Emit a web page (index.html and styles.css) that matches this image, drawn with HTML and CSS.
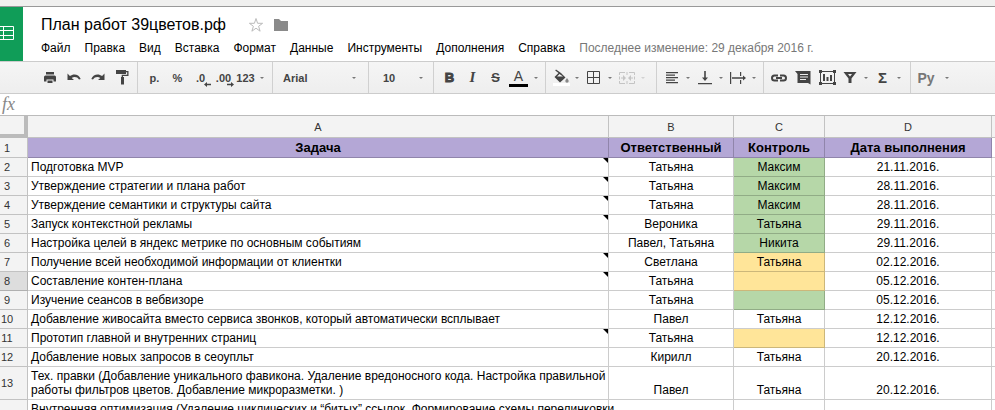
FILE: index.html
```html
<!DOCTYPE html>
<html lang="ru">
<head>
<meta charset="UTF-8">
<meta name="viewport" content="width=device-width, initial-scale=1.0">
<title>План работ 39цветов.рф</title>
<link rel="stylesheet" href="styles.css">
</head>
<body>

<!-- Header -->
<header class="header">
  <a class="logo" href="#" aria-label="Таблицы">
    <svg width="23" height="54" viewBox="0 0 23 54" fill="none" stroke="#fff" stroke-width="1"><path d="M-6 19.5H13.5V32.5H-6M-6 23.5H13.5M-6 28.5H13.5M3.5 19V33"/></svg>
  </a>
  <div class="header-main">
    <div class="title-row">
      <h1 class="title">План работ 39цветов.рф</h1>
      <button class="title-btn" aria-label="Пометить">
        <svg width="16" height="16" viewBox="0 0 16 16" fill="none" stroke="#bbb"><path d="M8 1.500l1.600 4.800h5l-4 3 1.500 4.900L8 11.200l-4.100 3 1.500-4.900-4-3h5z"/></svg>
      </button>
      <button class="title-btn" aria-label="Папка">
        <svg width="16" height="16" viewBox="0 0 16 16" fill="#8a8a8a"><path d="M1 2h5l2 2h7v10H1z"/></svg>
      </button>
    </div>
    <nav class="menu">
      <button>Файл</button>
      <button>Правка</button>
      <button>Вид</button>
      <button>Вставка</button>
      <button>Формат</button>
      <button>Данные</button>
      <button>Инструменты</button>
      <button>Дополнения</button>
      <button>Справка</button>
      <a class="changed" href="#">Последнее изменение: 29 декабря 2016 г.</a>
    </nav>
  </div>
</header>

<!-- Toolbar -->
<div class="toolbar">
  <div class="group group-file">
    <button class="tool" aria-label="Печать"><svg width="14" height="14" viewBox="0 0 14 14"><path fill="#444" d="M3 1h8v2.500H3zM2.500 4.500h9A1.500 1.500 0 0 1 13 6v4.500h-2.500V8.500h-7v2H1V6a1.500 1.500 0 0 1 1.500-1.500zM4.500 9.500h5V12h-5z"/></svg></button>
    <button class="tool" aria-label="Отменить"><svg width="14" height="14" viewBox="0 0 14 14"><path fill="#444" d="M.5 2.500v6.500h6.500L4.700 6.900C7 5.300 10.500 5.700 12 8.500l1.700-.6C11.700 3 6.500 2.300 2.900 5z"/></svg></button>
    <button class="tool" aria-label="Повторить"><svg width="14" height="14" viewBox="0 0 14 14"><path fill="#444" d="M13.500 2.500v6.500H7l2.300-2.100C7 5.300 3.500 5.700 2 8.500L.3 7.900C2.300 3 7.500 2.300 11.100 5z"/></svg></button>
    <button class="tool" aria-label="Копировать форматирование"><svg width="14" height="16" viewBox="0 0 14 16"><path fill="#444" d="M1 0h10v1h2.500v5H8v1h1v7.500H6V7h.700V4.700h5.500V2.300H11V4H1z"/></svg></button>
  </div>
  <div class="group group-number">
    <button class="tool narrow">р.</button>
    <button class="tool narrow">%</button>
    <button class="tool narrow decimal">.0<svg width="7" height="5" viewBox="0 0 7 5"><path fill="#444" d="M0 2.500L3 0v1.700h4v1.600H3V5z"/></svg></button>
    <button class="tool narrow decimal">.00<svg width="7" height="5" viewBox="0 0 7 5"><path fill="#444" d="M7 2.500L4 0v1.700H0v1.600h4V5z"/></svg></button>
    <button class="split"><span class="face">123</span><span class="caret"></span></button>
  </div>
  <div class="group group-font">
    <select class="font" aria-label="Шрифт"><option>Arial</option></select><span class="caret"></span>
  </div>
  <div class="group group-size">
    <select class="size" aria-label="Размер шрифта"><option>10</option></select><span class="caret"></span>
  </div>
  <div class="group group-text">
    <button class="tool narrow glyph bold">B</button>
    <button class="tool narrow glyph italic">I</button>
    <button class="tool narrow glyph strike">S</button>
    <button class="split wide"><span class="face color">A</span><span class="caret"></span></button>
  </div>
  <div class="group group-cell">
    <button class="split" aria-label="Цвет заливки"><span class="face"><svg width="18" height="18" viewBox="0 0 18 18"><path fill="#fff" d="M1 14h17v3H1z"/><path fill="#444" d="M4 .5L9 4l4.500 4.500L8 13.500 2.500 8l4-4-3.300-2.400zM7.500 5L5 7.500h6z"/><path fill="#888" d="M15 9c1 1.300 1.700 2.200 1.700 3a1.700 1.700 0 0 1-3.400 0c0-.8.700-1.700 1.700-3z"/></svg></span><span class="caret"></span></button>
    <button class="split" aria-label="Границы"><span class="face"><svg width="13" height="13" viewBox="0 0 13 13" fill="none" stroke="#444"><path d="M.5.5h12v12H.5zM6.500.5v12M.5 6.500h12"/></svg></span><span class="caret"></span></button>
    <button class="split" aria-label="Объединить ячейки" disabled><span class="face"><svg width="18" height="14" viewBox="0 0 18 14" fill="none" stroke="#444"><path d="M7 1.500H1.500V4M1.500 10v2.500H7M11 1.500h5.500V4M16.500 10v2.500H11M1.500 5.500v3M16.500 5.500v3M9 1v3M9 10v3M3 7h3M15 7h-3"/><path fill="#444" stroke="none" d="M5 4l3 3-3 3zM13 4l-3 3 3 3z"/></svg></span><span class="caret"></span></button>
  </div>
  <div class="group group-align">
    <button class="split" aria-label="Выравнивание по горизонтали"><span class="face"><svg width="14" height="12" viewBox="0 0 14 12"><path fill="#444" d="M1 0h12v1.300H1zM1 2.500h9v1.300H1zM1 5h12v1.300H1zM1 7.500h9v1.300H1zM1 10h12v1.300H1z"/></svg></span><span class="caret"></span></button>
    <button class="split" aria-label="Выравнивание по вертикали"><span class="face"><svg width="14" height="14" viewBox="0 0 14 14"><path fill="#444" d="M6.200 0h1.600v6.500H10l-3 3.500-3-3.500h2.200zM0 12h14v1.300H0z"/></svg></span><span class="caret"></span></button>
    <button class="split" aria-label="Перенос текста"><span class="face"><svg width="18" height="14" viewBox="0 0 18 14"><path fill="#444" d="M1 1h1.200v12H1zM11 1h1.200v4H11zM11 9h1.200v4H11zM3 6.200h11V4.500L17 7l-3 2.500V7.800H3z"/></svg></span><span class="caret"></span></button>
  </div>
  <div class="group group-insert">
    <button class="tool" aria-label="Вставить ссылку"><svg width="16" height="10" viewBox="0 0 16 10" fill="none" stroke="#444" stroke-width="2"><path d="M7 2.500H3.500a2.500 2.500 0 0 0 0 5H7M9 2.500h3.500a2.500 2.500 0 0 1 0 5H9M5 5h6"/></svg></button>
    <button class="tool" aria-label="Вставить комментарий"><svg width="16" height="14" viewBox="0 0 16 14"><path fill="#444" d="M0 0h15.500v13.500L13 12H2.500V3z"/><path stroke="#eee" d="M5 3.500h8M5 6h8M5 8.500h6"/></svg></button>
    <button class="tool" aria-label="Вставить диаграмму"><svg width="17" height="15" viewBox="0 0 17 15"><path fill="none" stroke="#444" d="M1.500 1.500h14v12h-14z"/><path fill="#444" d="M0 0h3v3H0zM14 0h3v3h-3zM0 12h3v3H0zM14 12h3v3h-3zM4 4h2v7H4zM7.500 7h2v4h-2zM11 5h2v6h-2z"/></svg></button>
    <button class="split" aria-label="Фильтр"><span class="face"><svg width="14" height="12" viewBox="0 0 14 12"><path fill="#444" fill-rule="evenodd" d="M.5 0h13L8.500 6.500V11h-3V6.500zM5 2l2 2.500L9 2z"/></svg></span><span class="caret"></span></button>
    <button class="split" aria-label="Функции"><span class="face sigma">Σ</span><span class="caret"></span></button>
  </div>
  <div class="group group-input">
    <button class="split input-tools"><span class="face">Ру</span><span class="caret"></span></button>
  </div>
</div>

<!-- Formula bar -->
<div class="formula">
  <label for="formulaInput">fx</label>
  <input id="formulaInput" type="text">
</div>

<!-- Sheet -->
<table class="sheet">
  <colgroup>
    <col class="col-num">
    <col>
    <col class="col-who">
    <col class="col-control">
    <col class="col-date">
    <col class="col-rest">
  </colgroup>
  <thead>
    <tr><th class="corner"></th><th>A</th><th>B</th><th>C</th><th>D</th><th></th></tr>
  </thead>
  <tbody>
    <tr class="names"><th>1</th><td>Задача</td><td>Ответственный</td><td>Контроль</td><td>Дата выполнения</td><td></td></tr>
    <tr><th>2</th><td class="note">Подготовка MVP</td><td>Татьяна</td><td class="green">Максим</td><td>21.11.2016.</td><td></td></tr>
    <tr><th>3</th><td class="note">Утверждение стратегии и плана работ</td><td>Татьяна</td><td class="green">Максим</td><td>28.11.2016.</td><td></td></tr>
    <tr><th>4</th><td class="note">Утверждение семантики и структуры сайта</td><td>Татьяна</td><td class="green">Максим</td><td>28.11.2016.</td><td></td></tr>
    <tr><th>5</th><td class="note">Запуск контекстной рекламы</td><td>Вероника</td><td class="green">Татьяна</td><td>29.11.2016.</td><td></td></tr>
    <tr><th>6</th><td>Настройка целей в яндекс метрике по основным событиям</td><td>Павел, Татьяна</td><td class="green">Никита</td><td>29.11.2016.</td><td></td></tr>
    <tr><th>7</th><td class="note">Получение всей необходимой информации от клиентки</td><td>Светлана</td><td class="yellow">Татьяна</td><td>02.12.2016.</td><td></td></tr>
    <tr><th class="current">8</th><td class="note">Составление контен-плана</td><td>Татьяна</td><td class="yellow"></td><td>05.12.2016.</td><td></td></tr>
    <tr><th>9</th><td>Изучение сеансов в вебвизоре</td><td>Татьяна</td><td class="green"></td><td>05.12.2016.</td><td></td></tr>
    <tr><th>10</th><td>Добавление живосайта вместо сервиса звонков, который автоматически всплывает</td><td>Павел</td><td>Татьяна</td><td>12.12.2016.</td><td></td></tr>
    <tr><th>11</th><td class="note">Прототип главной и внутренних страниц</td><td>Татьяна</td><td class="yellow"></td><td>12.12.2016.</td><td></td></tr>
    <tr><th>12</th><td>Добавление новых запросов в сеоупльт</td><td>Кирилл</td><td>Татьяна</td><td>20.12.2016.</td><td></td></tr>
    <tr><th>13</th><td>Тех. правки (Добавление уникального фавикона. Удаление вредоносного кода. Настройка правильной<br>работы фильтров цветов. Добавление микроразметки. )</td><td>Павел</td><td>Татьяна</td><td>20.12.2016.</td><td></td></tr>
    <tr><th></th><td>Внутренняя оптимизация (Удаление циклических и “битых” ссылок. Формирование схемы перелинковки</td><td></td><td></td><td></td><td></td></tr>
  </tbody>
</table>

</body>
</html>
```
FILE: styles.css
```css
* {
  box-sizing: border-box;
}
body {
  margin: 0;
  height: 100vh;
  overflow: hidden;
  border-top: 6px solid #f0f0ef;
  background: #fff;
  color: #000;
  font-family: "Liberation Sans", Arial, sans-serif;
  font-size: 12px;
}
button,
select,
input {
  margin: 0;
  padding: 0;
  border: none;
  background: none;
  color: inherit;
  font: inherit;
}
svg {
  display: block;
}

/* Header */
.header {
  display: flex;
  height: 55px;
  border-top: 1px solid #999;
}
.logo {
  width: 23px;
  background: #109d58;
}
.header-main {
  padding: 6px 0 0 18px;
}
.title-row {
  display: flex;
  align-items: center;
  height: 24px;
}
.title {
  margin: 0 22px 0 0;
  font-size: 16px;
  font-weight: normal;
}
.title-btn {
  margin-right: 9px;
}
.menu {
  display: flex;
  align-items: center;
  gap: 14px;
  height: 22px;
  white-space: nowrap;
}
.changed {
  color: #777;
  text-decoration: none;
}

/* Toolbar */
.toolbar {
  display: flex;
  height: 33px;
  border-top: 1px solid #ccc;
  border-bottom: 1px solid #ccc;
  background: linear-gradient(#f5f5f5, #eee);
  color: #444;
  font-size: 11px;
  font-weight: bold;
}
.group {
  display: flex;
  align-items: center;
  border-right: 1px solid #d0d0d0;
}
.group-file {
  padding: 0 3px 0 38px;
}
.group-number {
  padding: 0 4px 0 5px;
}
.group-font {
  padding: 0 8px 0 10px;
}
.group-size {
  padding: 0 6px 0 14px;
}
.group-text {
  padding: 0 3px 0 4px;
}
.group-cell {
  padding: 0 7px 0 4px;
}
.group-align {
  padding: 0 3px 0 4px;
}
.group-insert {
  padding: 0 5px 0 3px;
}
.group-input {
  border-right: none;
}
.tool {
  display: flex;
  align-items: center;
  justify-content: center;
  width: 24px;
  height: 24px;
}
.narrow {
  width: 23px;
}
.split {
  display: flex;
  align-items: center;
  height: 24px;
}
.split:disabled {
  opacity: 0.25;
}
.face {
  display: flex;
  align-items: center;
  justify-content: center;
  width: 21px;
}
.caret {
  display: flex;
  justify-content: center;
  width: 12px;
}
.caret::after {
  content: "";
  border: 2px solid transparent;
  border-top-color: #777;
  border-bottom: none;
}
.decimal {
  position: relative;
}
.decimal svg {
  position: absolute;
  right: 1px;
  bottom: 3px;
}
.font,
.size {
  appearance: none;
  outline: none;
}
.font {
  width: 65px;
}
.size {
  width: 32px;
}
.glyph {
  font-size: 13px;
}
.bold {
  -webkit-text-stroke: 1px #444;
}
.italic {
  font-family: "Liberation Serif", serif;
  font-size: 15px;
  font-style: italic;
}
.strike {
  text-decoration: line-through;
}
.color {
  font-size: 14px;
  font-weight: normal;
}
.wide .color {
  width: 19px;
  height: 19px;
  margin: 0 2px;
  border-bottom: 3px solid #000;
}
.sigma {
  font-size: 15px;
}
.input-tools {
  color: #777;
  font-size: 14px;
}
.input-tools .face {
  width: 30px;
}

/* Formula bar */
.formula {
  display: flex;
  align-items: center;
  height: 21px;
}
.formula label {
  width: 27px;
  padding-left: 2px;
  color: #888;
  font: italic 18px "Liberation Serif", serif;
}
.formula input {
  flex: 1;
  outline: none;
}

/* Sheet */
.sheet {
  width: 100%;
  border-top: 1px solid #bbb;
  border-spacing: 0;
  table-layout: fixed;
}
.col-num {
  width: 28px;
}
.col-who {
  width: 125px;
}
.col-control {
  width: 91px;
}
.col-date {
  width: 167px;
}
.col-rest {
  width: 3px;
}
.sheet th,
.sheet td {
  height: 19px;
  padding: 2px 3px;
  border-right: 1px solid rgba(0, 0, 0, 0.2);
  border-bottom: 1px solid rgba(0, 0, 0, 0.2);
  line-height: 14px;
  text-align: center;
  vertical-align: bottom;
  white-space: nowrap;
}
.sheet th:last-child,
.sheet td:last-child {
  padding: 0;
  border-right: none;
}
.sheet th {
  background: #f3f3f3;
  color: #333;
  font-size: 11px;
  font-weight: normal;
  vertical-align: middle;
}
.sheet thead th {
  height: 22px;
}
.sheet tbody th {
  padding: 0 13px 0 0;
}
.sheet td:nth-child(2) {
  text-align: left;
}
.sheet .corner {
  border-right: 4px solid #bbb;
  border-bottom: 4px solid #bbb;
}
.sheet .current {
  background: #ddd;
}
.sheet .names td {
  height: 20px;
  background: #b4a7d6;
  font-size: 13px;
  font-weight: bold;
  text-align: center;
}
.sheet .names td:last-child {
  background: #fff;
}
.sheet .green {
  background: #b6d7a8;
}
.sheet .yellow {
  background: #ffe599;
}
/* comment marker in the cell corner */
.sheet .note {
  background: linear-gradient(225deg, #000 3px, transparent 4px) no-repeat;
}
```
